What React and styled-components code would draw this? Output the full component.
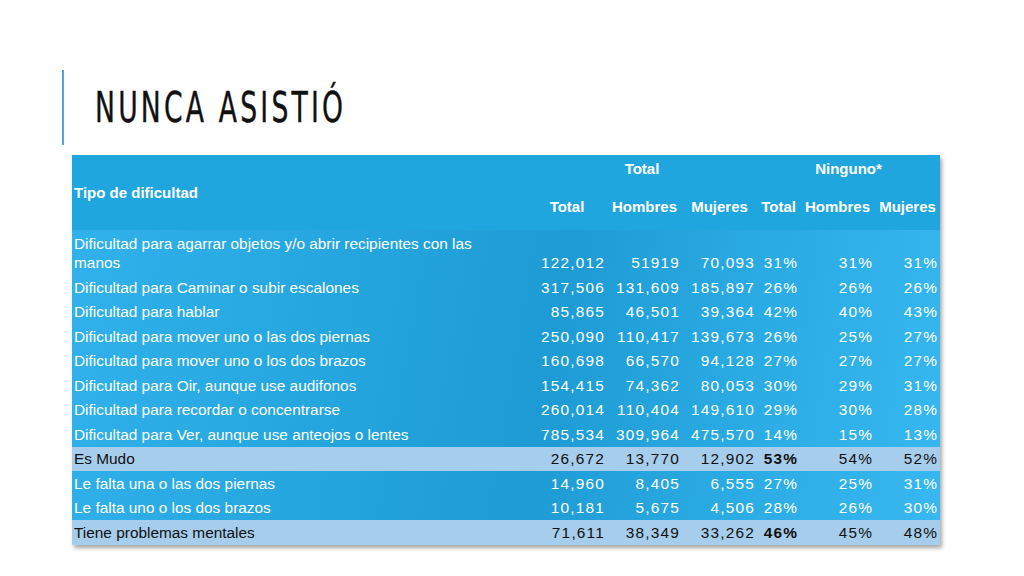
import React from 'react';
import styled, { createGlobalStyle } from 'styled-components';

const GlobalStyle = createGlobalStyle`
  html, body {
    margin: 0;
    padding: 0;
    background: #ffffff;
  }
`;

const Slide = styled.div`
  width: 1024px;
  height: 576px;
  background: #ffffff;
  overflow: hidden;
  font-family: 'Liberation Sans', Arial, sans-serif;
`;

const TitleBar = styled.div`
  margin: 70px 0 0 62px;
  height: 75px;
  border-left: 2px solid #4ba9da;
  padding-left: 31px;
  display: flex;
  align-items: center;
`;

// the slide font is a tall condensed face; squeeze a regular one to match
const Title = styled.h1`
  margin: 0;
  font-family: 'DejaVu Sans', sans-serif;
  font-weight: normal;
  font-size: 42px;
  letter-spacing: 5px;
  color: #111111;
  line-height: 1;
  white-space: nowrap;
  -webkit-text-stroke: 0.4px #111111;
  transform: scaleX(0.635);
  transform-origin: left center;
`;

const Table = styled.table`
  margin: 10px 0 0 72px;
  width: 868px;
  border-collapse: collapse;
  table-layout: fixed;
  font-size: 15.4px;
  color: #ffffff;
  box-shadow: 2px 3px 4px rgba(0, 0, 0, 0.35);
  background: linear-gradient(100deg, #31b2ec 0%, #22a2da 40%, #1e9bd4 55%, #2aaae2 75%, #38b8f0 100%);
`;

const Head = styled.thead`
  background: #1fa6de;
`;

const HeadCell = styled.th`
  font-weight: bold;
  font-size: 15px;
  text-align: ${p => (p.$left ? 'left' : 'center')};
  padding: 0 ${p => (p.$left ? '2px' : '0')};
  height: ${p => p.$h}px;
  vertical-align: middle;
  white-space: nowrap;
`;

const Row = styled.tr`
  height: ${p => p.$h || 24.5}px;
  background: ${p => (p.$light ? '#a6cdec' : 'transparent')};
  color: ${p => (p.$light ? '#111111' : '#ffffff')};
`;

const Label = styled.td`
  text-align: left;
  padding: 0 30px 3px 2px;
  line-height: 19px;
  vertical-align: bottom;
`;

const Num = styled.td`
  text-align: right;
  padding: 0 2px 3px 0;
  vertical-align: bottom;
  white-space: nowrap;
  letter-spacing: 1.2px;
  font-weight: ${p => (p.$bold ? 'bold' : 'normal')};
  font-size: 15.4px;
`;

const rows = [
  { label: 'Dificultad para agarrar objetos y/o abrir recipientes con las manos', v: ['122,012', '51919', '70,093', '31%', '31%', '31%'], h: 45 },
  { label: 'Dificultad para Caminar o subir escalones', v: ['317,506', '131,609', '185,897', '26%', '26%', '26%'] },
  { label: 'Dificultad para hablar', v: ['85,865', '46,501', '39,364', '42%', '40%', '43%'] },
  { label: 'Dificultad para mover uno o las dos piernas', v: ['250,090', '110,417', '139,673', '26%', '25%', '27%'] },
  { label: 'Dificultad para mover uno o los dos brazos', v: ['160,698', '66,570', '94,128', '27%', '27%', '27%'] },
  { label: 'Dificultad para Oir, aunque use audifonos', v: ['154,415', '74,362', '80,053', '30%', '29%', '31%'] },
  { label: 'Dificultad para recordar o concentrarse', v: ['260,014', '110,404', '149,610', '29%', '30%', '28%'] },
  { label: 'Dificultad para Ver, aunque use anteojos o lentes', v: ['785,534', '309,964', '475,570', '14%', '15%', '13%'] },
  { label: 'Es Mudo', v: ['26,672', '13,770', '12,902', '53%', '54%', '52%'], light: true },
  { label: 'Le falta una o las dos piernas', v: ['14,960', '8,405', '6,555', '27%', '25%', '31%'] },
  { label: 'Le falta uno o los dos brazos', v: ['10,181', '5,675', '4,506', '28%', '26%', '30%'] },
  { label: 'Tiene problemas mentales', v: ['71,611', '38,349', '33,262', '46%', '45%', '48%'], light: true },
];

const widths = [455, 80, 75, 75, 43, 75, 65];

export default function App() {
  return (
    <Slide>
      <GlobalStyle />
      <TitleBar>
        <Title>NUNCA ASISTIÓ</Title>
      </TitleBar>
      <Table>
        <colgroup>
          {widths.map((w, i) => (
            <col key={i} style={{ width: w }} />
          ))}
        </colgroup>
        <Head>
          <tr>
            <HeadCell $left rowSpan={2}>Tipo de dificultad</HeadCell>
            <HeadCell colSpan={3} $h={27}>Total</HeadCell>
            <HeadCell colSpan={3} $h={27}>Ninguno*</HeadCell>
          </tr>
          <tr>
            <HeadCell $h={48}>Total</HeadCell>
            <HeadCell $h={48}>Hombres</HeadCell>
            <HeadCell $h={48}>Mujeres</HeadCell>
            <HeadCell $h={48}>Total</HeadCell>
            <HeadCell $h={48}>Hombres</HeadCell>
            <HeadCell $h={48}>Mujeres</HeadCell>
          </tr>
        </Head>
        <tbody>
          {rows.map(r => (
            <Row key={r.label} $light={r.light} $h={r.h}>
              <Label>{r.label}</Label>
              {r.v.map((x, i) => (
                <Num key={i} $bold={r.light && i === 3}>{x}</Num>
              ))}
            </Row>
          ))}
        </tbody>
      </Table>
    </Slide>
  );
}
